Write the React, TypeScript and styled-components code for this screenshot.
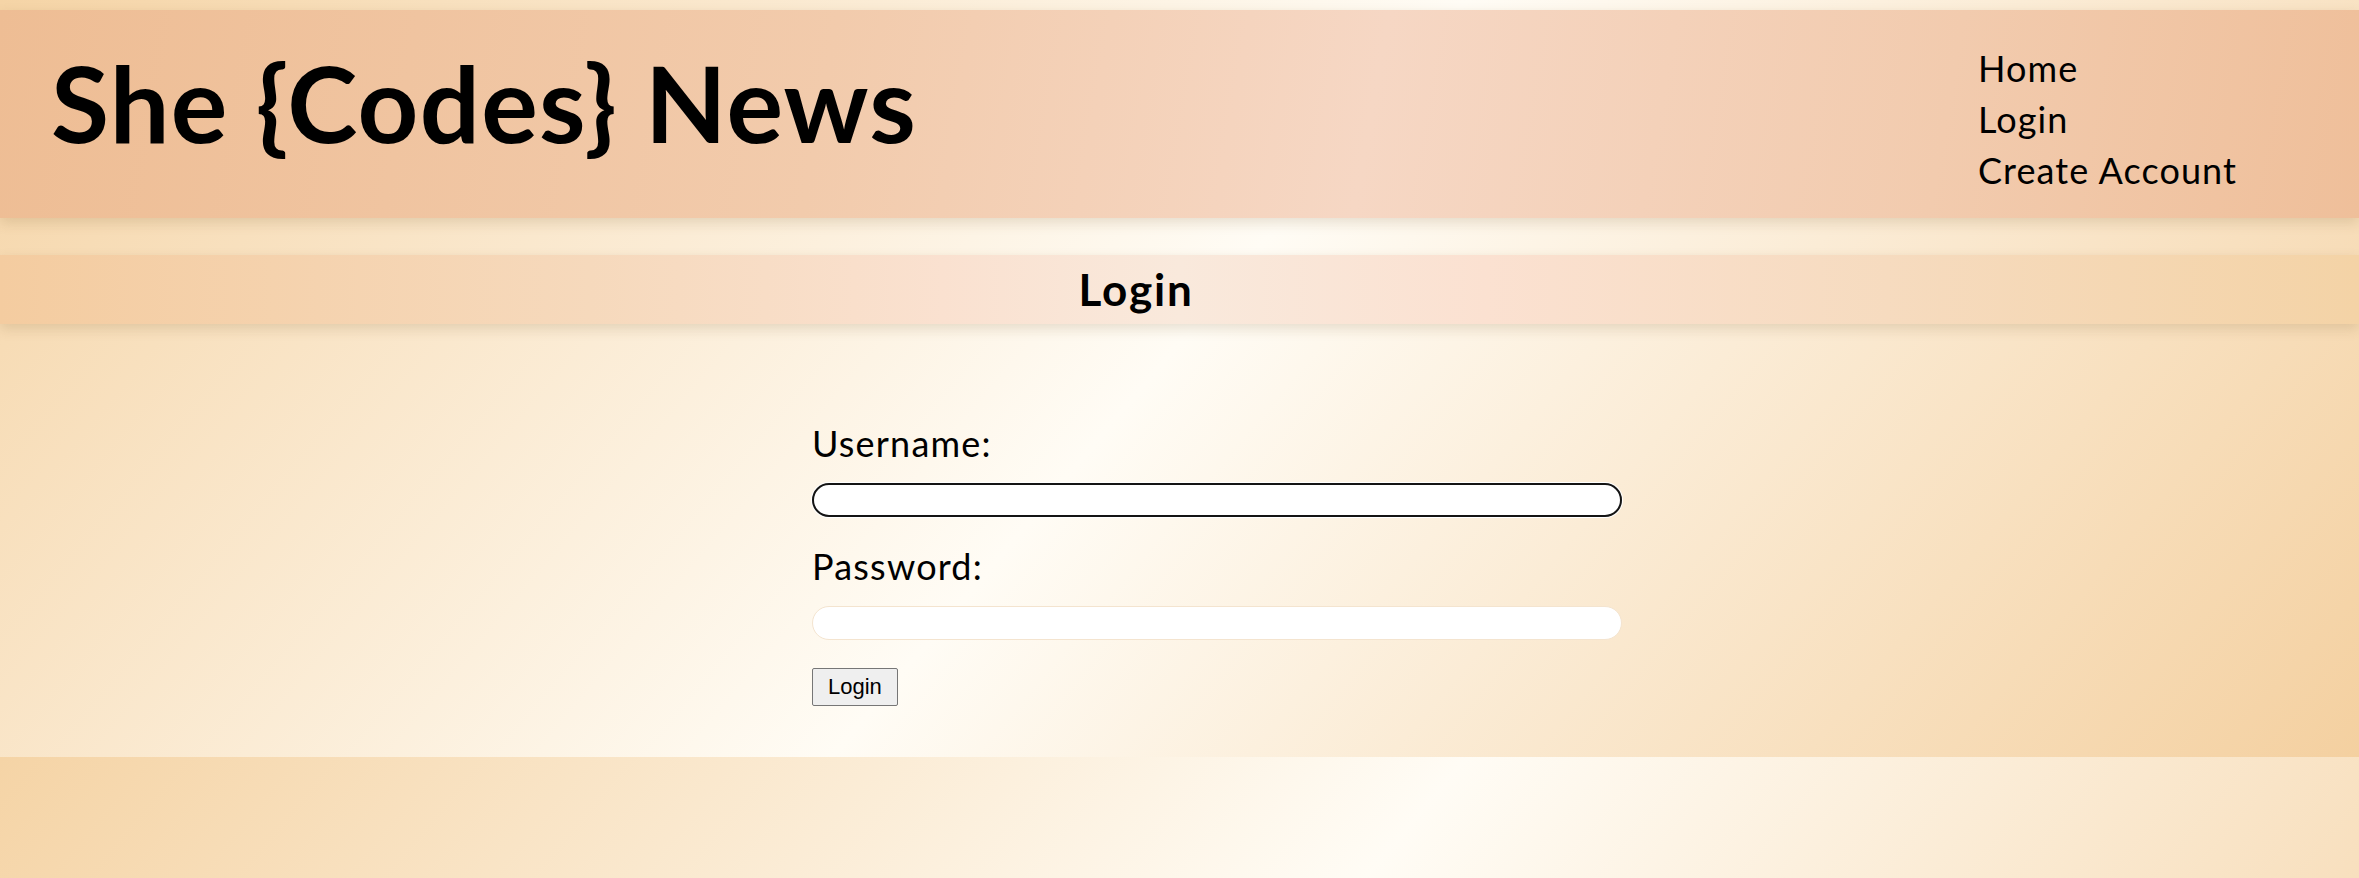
import styled, { createGlobalStyle } from "styled-components";

const GlobalStyle = createGlobalStyle`
  html, body {
    margin: 0;
    padding: 0;
  }
  body {
    font-family: Lato, "Noto Sans", sans-serif;
    color: #000;
    background: linear-gradient(130deg, #f5d4a6 0%, #fffcf5 49%, #f4d0a0 100%);
    background-size: 100% 757px;
    background-repeat: repeat;
  }
`;

const Header = styled.header`
  display: flex;
  justify-content: space-between;
  align-items: center;
  height: 208px;
  margin-top: 10px;
  padding: 0 110px 0 51px;
  box-sizing: border-box;
  background: linear-gradient(
    100deg,
    #eebd94 0%,
    #f2cbac 35%,
    #f6d7c4 58%,
    #f2cbae 82%,
    #efbf9a 100%
  );
  box-shadow: 0 5px 12px rgba(110, 80, 30, 0.16);
  position: relative;
  z-index: 1;
`;

const Title = styled.h1`
  margin: 0 0 22px 0;
  font-size: 106px;
  line-height: 1.2;
  font-weight: 700;
  letter-spacing: 1.3px;
`;

const Nav = styled.nav`
  display: flex;
  flex-direction: column;
  margin-top: 10px;
  width: 271px;
`;

const NavLink = styled.a`
  font-size: 36px;
  line-height: 51px;
  letter-spacing: 1.1px;
  color: #000;
  text-decoration: none;
  white-space: nowrap;
`;

const SubBar = styled.div`
  display: flex;
  align-items: center;
  justify-content: center;
  height: 69px;
  margin-top: 37px;
  padding-right: 87px;
  background: linear-gradient(
    to right,
    #f4cca0 0%,
    #f6d9bc 25%,
    #fae1d0 40%,
    #f9e9dc 50%,
    #fbe1d1 63%,
    #f6dbbf 80%,
    #f4d3a6 100%
  );
  box-shadow: 0 5px 12px rgba(110, 80, 30, 0.16);
  position: relative;
  z-index: 1;
`;

const SubTitle = styled.h2`
  margin: 0;
  font-size: 44px;
  font-weight: 700;
  line-height: 1.2;
  letter-spacing: 1.8px;
`;

const Main = styled.main`
  padding: 98px 0 50px 812px;
`;

const Form = styled.form`
  display: flex;
  flex-direction: column;
  align-items: flex-start;
  width: 810px;
`;

const Label = styled.label`
  font-size: 36px;
  line-height: 1.2;
  letter-spacing: 1.2px;
  margin-bottom: 18px;
`;

const Input = styled.input<{ $focused?: boolean }>`
  width: 810px;
  height: 34px;
  margin: 0 0 28px 0;
  padding: 0 10px;
  box-sizing: border-box;
  border-radius: 17px;
  background: #fff;
  font-size: 20px;
  outline: none;
  border: ${(p) => (p.$focused ? "2px solid #141414" : "1px solid #f4e4cf")};
  box-shadow: ${(p) => (p.$focused ? "0 0 0 1px #ffffff" : "none")};
`;

const Button = styled.button`
  height: 38px;
  padding: 0 15px;
  font-family: "Liberation Sans", Arial, sans-serif;
  font-size: 22px;
  color: #000;
  background: #efefef;
  border: 1px solid #767676;
  border-radius: 2px;
`;

export default function App() {
  return (
    <>
      <GlobalStyle />
      <Header>
        <Title>She {"{Codes}"} News</Title>
        <Nav>
          <NavLink href="#">Home</NavLink>
          <NavLink href="#">Login</NavLink>
          <NavLink href="#">Create Account</NavLink>
        </Nav>
      </Header>
      <SubBar>
        <SubTitle>Login</SubTitle>
      </SubBar>
      <Main>
        <Form onSubmit={(e) => e.preventDefault()}>
          <Label htmlFor="username">Username:</Label>
          <Input id="username" type="text" $focused />
          <Label htmlFor="password">Password:</Label>
          <Input id="password" type="password" />
          <Button type="submit">Login</Button>
        </Form>
      </Main>
    </>
  );
}
